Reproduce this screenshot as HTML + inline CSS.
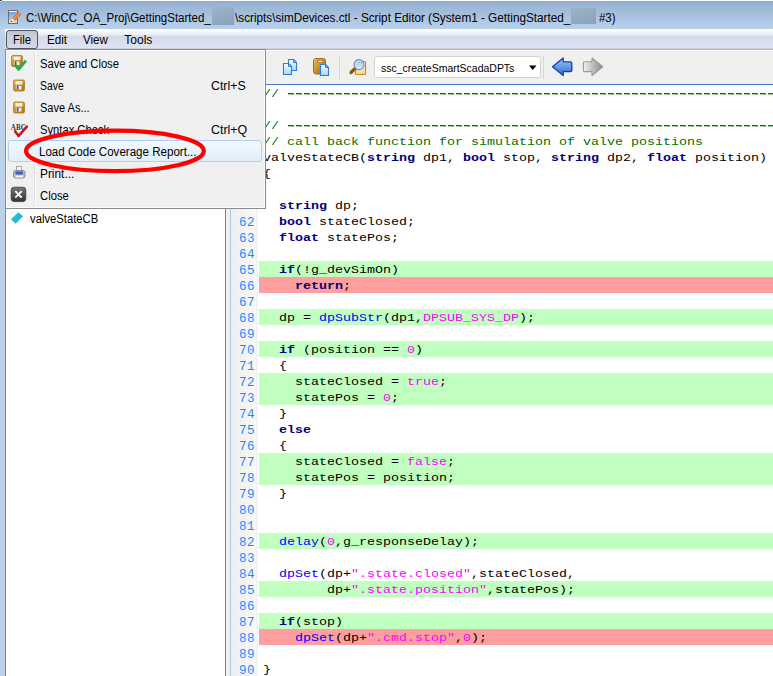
<!DOCTYPE html>
<html><head><meta charset="utf-8">
<style>
*{margin:0;padding:0;box-sizing:border-box}
html,body{width:773px;height:676px;overflow:hidden;background:#fff;position:relative;font-family:"Liberation Sans",sans-serif;font-size:12px;color:#000}
.a{position:absolute}
.t{position:absolute;white-space:pre;transform-origin:0 0;line-height:14px}
#frame{left:0;top:0;width:773px;height:676px;background:#bcd2eb}
#title{left:0;top:1px;width:773px;height:28px;background:linear-gradient(#8aa8cb,#96b2d3 2px,#b9d1eb)}
#topline{left:0;top:0;width:773px;height:1px;background:linear-gradient(90deg,#111 0,#111 1px,#aaa 1px,#eee 3px,#fff 4px)}
.blur{position:absolute;background:linear-gradient(160deg,#9db3c9,#8aa0b8)}
#menubar{left:5px;top:29px;width:768px;height:22px;background:linear-gradient(#fefefe 0,#fcfdfe 2px,#eef0f7 4px,#e9ecf5 6px,#d5daeb 7px,#dfe4f3 19px,#b4b8c8 20px,#b4b8c8 21px,#fff 21px)}
#filebtn{left:6px;top:30px;width:32px;height:19px;border:1px solid #50545e;border-radius:3px;background:linear-gradient(#c2c4ca,#cdd1dc 40%,#d6daea)}
#toolbar{left:5px;top:51px;width:768px;height:33px;background:#f0f0f0}
#tbline{left:258px;top:84px;width:515px;height:2px;background:linear-gradient(#4d80c2 50%,#a8c0e0 50%)}
#left{left:6px;top:85px;width:219px;height:591px;background:#fff}
#leftshadow{left:5px;top:85px;width:1px;height:591px;background:#7a8490}
#split{left:225px;top:85px;width:1px;height:591px;background:#787e88}
#split2{left:226px;top:85px;width:4px;height:591px;background:#f0f0f0}
#gut{left:230px;top:85px;width:29px;height:591px;background:linear-gradient(90deg,#eeeeee,#f8f8f8 26px,#ececec 27px,#fff 28px)}
#gutl{left:230px;top:85px;width:1px;height:591px;background:#a9c6e6}
#code{left:259px;top:85px;width:514px;height:591px;background:#fff}
.ln{position:absolute;left:259px;width:514px;height:16px}
.g{background:#c0ffc0}
.r{background:#ff9e9e}
pre{font-family:"Liberation Mono",monospace;font-size:13.333px;line-height:16px;white-space:pre;position:absolute;left:4px;top:1px;transform:scaleY(0.85);transform-origin:0 12px}
.num{position:absolute;left:231px;width:24px;text-align:right;font-family:"Liberation Mono",monospace;font-size:12.5px;letter-spacing:0.5px;line-height:16px;color:#1e8cff}
.k{color:#000080;font-weight:bold}
.f{color:#0000ff}
.c{color:#007000}
.m{color:#ff00ff}
.dash{position:absolute;left:288px;width:485px;height:2px;background:linear-gradient(rgba(255,255,255,0) 50%,rgba(255,255,255,.6) 50%),repeating-linear-gradient(90deg,#008000 0 6px,transparent 6px 8px)}
#menu{left:5px;top:49px;width:261px;height:160px;background:#f0f0f0;border:1px solid #8c8c8c;box-shadow:inset 0 0 0 1px #fbfbfb}
#menusep{left:34px;top:51px;width:1px;height:155px;background:#e0e0e0}
#menusep2{left:35px;top:51px;width:1px;height:155px;background:#fff}
#hl{left:8px;top:140px;width:254px;height:22px;border:1px solid #aecff7;border-radius:3px;background:linear-gradient(#f2f8fe,#e2eefb)}
</style></head><body>
<div class="a" id="frame"></div>
<div class="a" id="topline"></div>
<div class="a" id="title"></div><div class="a" style="left:0;top:1px;width:1px;height:1px;background:#f4f6fa"></div>
<svg class="a" style="left:0;top:0" width="30" height="30">
<defs><linearGradient id="ti" x1="0" y1="0" x2="0" y2="1"><stop offset="0" stop-color="#5d9de6"/><stop offset="0.6" stop-color="#9cc4ee"/><stop offset="1" stop-color="#dcdcdc"/></linearGradient>
<linearGradient id="pen" x1="0" y1="0" x2="1" y2="1"><stop offset="0" stop-color="#fff0e0"/><stop offset="0.35" stop-color="#f89050"/><stop offset="1" stop-color="#e05000"/></linearGradient></defs>
<rect x="8.5" y="10.5" width="9" height="13" fill="#d4d4d4" stroke="#6e6e6e"/>
<rect x="9" y="11" width="8" height="11.5" fill="url(#ti)"/>
<rect x="9" y="11" width="8" height="1" fill="#fff"/>
<path d="M12.2 18.4 L18.8 11.8 L21.4 14.4 L14.8 21 Z" fill="url(#pen)"/>
<path d="M12.2 18.4 L18.8 11.8" stroke="#b05020" stroke-width="0.6" opacity="0.7"/>
<path d="M12.2 18.4 L14.8 21 L10.8 22 Z" fill="#fff4c8"/>
<path d="M11.4 20.6 L12.2 21.4 L10.8 22 Z" fill="#222"/>
</svg>
<div class="t" style="left:26.04px;top:11px;transform:scaleX(0.9583)">C:\WinCC_OA_Proj\GettingStarted_</div>
<div class="blur" style="left:212px;top:7px;width:22px;height:18px"></div>
<div class="t" style="left:235.0px;top:11px;transform:scaleX(0.9784)">\scripts\simDevices.ctl - Script Editor (System1 - GettingStarted_</div>
<div class="blur" style="left:571px;top:8px;width:25px;height:16px"></div>
<div class="t" style="left:599.0px;top:11px;transform:scaleX(0.9529)">#3)</div>
<div class="a" id="menubar"></div>
<div class="a" id="filebtn"></div>
<div class="t" style="left:12.57px;top:33px;transform:scaleX(0.9333)">File</div><div class="t" style="left:46.73px;top:33px;transform:scaleX(0.97)">Edit</div><div class="t" style="left:83.4px;top:33px;transform:scaleX(0.9577)">View</div><div class="t" style="left:124.3px;top:33px;transform:scaleX(1.0)">Tools</div>
<div class="a" id="toolbar"></div>
<div class="a" id="tbline"></div>
<svg class="a" style="left:0;top:0" width="773" height="90">
<defs>
<linearGradient id="docg" x1="0" y1="0" x2="0" y2="1"><stop offset="0" stop-color="#fdfeff"/><stop offset="1" stop-color="#a9d3f6"/></linearGradient>
<linearGradient id="goldg" x1="0" y1="0" x2="1" y2="1"><stop offset="0" stop-color="#f0c36a"/><stop offset="0.5" stop-color="#c8902a"/><stop offset="1" stop-color="#9a6410"/></linearGradient>
<linearGradient id="backg" x1="0" y1="0" x2="0" y2="1"><stop offset="0" stop-color="#9cc8fa"/><stop offset="1" stop-color="#2a6ad8"/></linearGradient>
<linearGradient id="fwdg" x1="0" y1="0" x2="1" y2="0"><stop offset="0" stop-color="#f0f0f0"/><stop offset="1" stop-color="#8a8a8a"/></linearGradient>
<linearGradient id="creamg" x1="0" y1="0" x2="0" y2="1"><stop offset="0" stop-color="#fffdf6"/><stop offset="1" stop-color="#efd598"/></linearGradient>
<linearGradient id="lensg" x1="0" y1="0" x2="0" y2="1"><stop offset="0" stop-color="#86b8e6"/><stop offset="1" stop-color="#e4f8ff"/></linearGradient>
</defs>
<path d="M288.5 59.5 h5 l3 3 v8 h-8 z" fill="url(#docg)" stroke="#2a7fd6" stroke-width="1.1" stroke-linejoin="round"/>
<path d="M293.5 59.5 v3 h3" fill="none" stroke="#2a7fd6" stroke-width="1"/>
<path d="M283.5 63.5 h5 l3 3 v8 h-8 z" fill="url(#docg)" stroke="#2a7fd6" stroke-width="1.1" stroke-linejoin="round"/>
<path d="M288.5 63.5 v3 h3" fill="none" stroke="#2a7fd6" stroke-width="1"/>
<rect x="313.5" y="58.5" width="12" height="15.5" rx="2.5" fill="url(#goldg)" stroke="#a66c14" stroke-width="1"/>
<rect x="317.5" y="60.5" width="5" height="2" fill="#fff" stroke="#8a5a10" stroke-width="0.6"/>
<path d="M320.5 64.5 h5 l3 3 v8 h-8 z" fill="url(#docg)" stroke="#2a7fd6" stroke-width="1.1" stroke-linejoin="round"/>
<path d="M325.5 64.5 v3 h3" fill="none" stroke="#2a7fd6" stroke-width="1"/>
<rect x="339" y="56" width="1" height="23" fill="#d6d6d6"/>
<rect x="543" y="56" width="1" height="23" fill="#d6d6d6"/>
<rect x="355.5" y="61.5" width="10" height="13" rx="1" fill="url(#creamg)" stroke="#d08a12" stroke-width="1.2"/>
<path d="M351 72.5 L355 68.5" stroke="#8a5a10" stroke-width="3.2" stroke-linecap="round"/>
<circle cx="359" cy="64.6" r="5" fill="url(#lensg)" stroke="#7f86c8" stroke-width="1.1"/><path d="M356 64 A3.4 3.4 0 0 1 361 61.3" fill="none" stroke="#fff" stroke-width="0.9" opacity="0.85"/>
<rect x="374.5" y="56.5" width="166" height="21" rx="2" fill="#fff" stroke="#d2d2d2"/>
<path d="M529 65.5 h7.5 l-3.75 4.5 z" fill="#000"/>
<path d="M552.5 66.8 L563.2 58 L563.2 61.8 L570.5 61.8 Q571.8 61.8 571.8 63 L571.8 70.5 Q571.8 71.6 570.5 71.6 L563.2 71.6 L563.2 75.6 Z" fill="url(#backg)" stroke="#1440a8" stroke-width="1.3" stroke-linejoin="round"/>
<path d="M602.8 66.8 L592 58 L592 61.8 L584.7 61.8 Q583.4 61.8 583.4 63 L583.4 70.5 Q583.4 71.6 584.7 71.6 L592 71.6 L592 75.6 Z" fill="url(#fwdg)" stroke="#9a9a9a" stroke-width="1.1" stroke-linejoin="round"/>
</svg>
<div class="t" style="left:381.45px;top:61px;transform:scaleX(0.9525);font-size:11px">ssc_createSmartScadaDPTs</div>
<div class="a" id="leftshadow"></div>
<div class="a" id="left"></div>
<svg class="a" style="left:0;top:200px" width="30" height="30"><path d="M18.3 12.3 L23 16.3 L15.7 23.7 L11 19.3 Z" fill="#2bb8cc"/></svg>
<div class="t" style="left:29.9px;top:212px;transform:scaleX(0.9375)">valveStateCB</div>
<div class="a" id="split"></div>
<div class="a" id="split2"></div>
<div class="a" id="gut"></div>
<div class="a" id="gutl"></div>
<div class="a" id="code"></div>
<div class="ln " style="top:85px"><pre><span class="c">//</span></pre></div>
<div class="ln " style="top:101px"><pre></pre></div>
<div class="ln " style="top:117px"><pre><span class="c">//</span></pre></div>
<div class="ln " style="top:133px"><pre><span class="c">// call back function for simulation of valve positions</span></pre></div>
<div class="ln " style="top:149px"><pre>valveStateCB(<span class="k">string</span> dp1, <span class="k">bool</span> stop, <span class="k">string</span> dp2, <span class="k">float</span> position)</pre></div>
<div class="ln " style="top:165px"><pre>{</pre></div>
<div class="ln " style="top:181px"><pre></pre></div>
<div class="ln " style="top:197px"><pre>  <span class="k">string</span> dp;</pre></div>
<div class="ln " style="top:213px"><pre>  <span class="k">bool</span> stateClosed;</pre></div>
<div class="num" style="top:215px">62</div>
<div class="ln " style="top:229px"><pre>  <span class="k">float</span> statePos;</pre></div>
<div class="num" style="top:231px">63</div>
<div class="ln " style="top:245px"><pre></pre></div>
<div class="num" style="top:247px">64</div>
<div class="ln g" style="top:261px"><pre>  <span class="k">if</span>(!g_devSimOn)</pre></div>
<div class="num" style="top:263px">65</div>
<div class="ln r" style="top:277px"><pre>    <span class="k">return</span>;</pre></div>
<div class="num" style="top:279px">66</div>
<div class="ln " style="top:293px"><pre></pre></div>
<div class="num" style="top:295px">67</div>
<div class="ln g" style="top:309px"><pre>  dp = <span class="f">dpSubStr</span>(dp1,<span class="m">DPSUB_SYS_DP</span>);</pre></div>
<div class="num" style="top:311px">68</div>
<div class="ln " style="top:325px"><pre></pre></div>
<div class="num" style="top:327px">69</div>
<div class="ln g" style="top:341px"><pre>  <span class="k">if</span> (position == <span class="m">0</span>)</pre></div>
<div class="num" style="top:343px">70</div>
<div class="ln " style="top:357px"><pre>  {</pre></div>
<div class="num" style="top:359px">71</div>
<div class="ln g" style="top:373px"><pre>    stateClosed = <span class="m">true</span>;</pre></div>
<div class="num" style="top:375px">72</div>
<div class="ln g" style="top:389px"><pre>    statePos = <span class="m">0</span>;</pre></div>
<div class="num" style="top:391px">73</div>
<div class="ln " style="top:405px"><pre>  }</pre></div>
<div class="num" style="top:407px">74</div>
<div class="ln " style="top:421px"><pre>  <span class="k">else</span></pre></div>
<div class="num" style="top:423px">75</div>
<div class="ln " style="top:437px"><pre>  {</pre></div>
<div class="num" style="top:439px">76</div>
<div class="ln g" style="top:453px"><pre>    stateClosed = <span class="m">false</span>;</pre></div>
<div class="num" style="top:455px">77</div>
<div class="ln g" style="top:469px"><pre>    statePos = position;</pre></div>
<div class="num" style="top:471px">78</div>
<div class="ln " style="top:485px"><pre>  }</pre></div>
<div class="num" style="top:487px">79</div>
<div class="ln " style="top:501px"><pre></pre></div>
<div class="num" style="top:503px">80</div>
<div class="ln " style="top:517px"><pre></pre></div>
<div class="num" style="top:519px">81</div>
<div class="ln g" style="top:533px"><pre>  <span class="f">delay</span>(<span class="m">0</span>,g_responseDelay);</pre></div>
<div class="num" style="top:535px">82</div>
<div class="ln " style="top:549px"><pre></pre></div>
<div class="num" style="top:551px">83</div>
<div class="ln " style="top:565px"><pre>  <span class="f">dpSet</span>(dp+<span class="m">".state.closed"</span>,stateClosed,</pre></div>
<div class="num" style="top:567px">84</div>
<div class="ln g" style="top:581px"><pre>        dp+<span class="m">".state.position"</span>,statePos);</pre></div>
<div class="num" style="top:583px">85</div>
<div class="ln " style="top:597px"><pre></pre></div>
<div class="num" style="top:599px">86</div>
<div class="ln g" style="top:613px"><pre>  <span class="k">if</span>(stop)</pre></div>
<div class="num" style="top:615px">87</div>
<div class="ln r" style="top:629px"><pre>    <span class="f">dpSet</span>(dp+<span class="m">".cmd.stop"</span>,<span class="m">0</span>);</pre></div>
<div class="num" style="top:631px">88</div>
<div class="ln " style="top:645px"><pre></pre></div>
<div class="num" style="top:647px">89</div>
<div class="ln " style="top:661px"><pre>}</pre></div>
<div class="num" style="top:663px">90</div>
<div class="dash" style="top:93px"></div><div class="dash" style="top:125px"></div>
<div class="a" id="menu"></div>
<div class="a" id="menusep"></div>
<div class="a" id="menusep2"></div>
<div class="a" id="hl"></div>
<svg class="a" style="left:0;top:0" width="40" height="230">
<defs>
<linearGradient id="flop" x1="0" y1="0" x2="1" y2="1"><stop offset="0" stop-color="#e6b860"/><stop offset="1" stop-color="#a86c10"/></linearGradient>
<linearGradient id="grayb" x1="0" y1="0" x2="0" y2="1"><stop offset="0" stop-color="#777"/><stop offset="1" stop-color="#333"/></linearGradient>
</defs>
<rect x="11.5" y="55.5" width="11" height="11" rx="1.5" fill="url(#flop)" stroke="#b07a20" stroke-width="0.8"/>
<rect x="13.5" y="56.5" width="7" height="3.5" fill="#fbeed0"/>
<rect x="14.5" y="61.5" width="5" height="3.5" fill="#f0f0f0"/>
<rect x="15" y="61.5" width="1.5" height="3.5" fill="#555"/>
<path d="M15.2 65.2 L18.6 69.4 L26 60.6" fill="none" stroke="#22b04a" stroke-width="2.8" stroke-linejoin="round"/>
<rect x="13.5" y="80" width="11" height="11" rx="1.5" fill="url(#flop)" stroke="#b07a20" stroke-width="0.8"/>
<rect x="15.5" y="81" width="7" height="3.5" fill="#fbeed0"/>
<rect x="16.5" y="86" width="5" height="3.5" fill="#f0f0f0"/>
<rect x="17" y="86" width="1.5" height="3.5" fill="#555"/>
<rect x="13.5" y="102" width="11" height="11" rx="1.5" fill="url(#flop)" stroke="#b07a20" stroke-width="0.8"/>
<rect x="15.5" y="103" width="7" height="3.5" fill="#fbeed0"/>
<rect x="16.5" y="108" width="5" height="3.5" fill="#f0f0f0"/>
<rect x="17" y="108" width="1.5" height="3.5" fill="#555"/>
<text x="10.8" y="129.8" font-family="Liberation Serif" font-weight="bold" font-size="7.6" fill="#3a3a3a" textLength="15" lengthAdjust="spacingAndGlyphs">ABC</text>
<path d="M15.2 131.4 L18.6 136 L26.8 126.6" fill="none" stroke="#c4141c" stroke-width="2.6" stroke-linejoin="round" stroke-linecap="round"/>
<rect x="16.5" y="166.5" width="5" height="5" fill="#f4f4f4" stroke="#999" stroke-width="0.8"/>
<rect x="13.5" y="170.5" width="11.5" height="7.5" rx="2" fill="#b8b8b8" stroke="#808080" stroke-width="0.8"/>
<rect x="15.5" y="171.5" width="7.5" height="3" rx="1" fill="#2a62d8"/>
<rect x="15.5" y="175.5" width="7.5" height="2" fill="#f4f4f4"/>
<rect x="11.2" y="187.2" width="14.6" height="14.4" rx="3" fill="url(#grayb)" stroke="#3a3a3a" stroke-width="0.8"/>
<path d="M15.3 191.2 L21.7 197.6 M21.7 191.2 L15.3 197.6" stroke="#fff" stroke-width="1.9"/>
</svg>
<div class="t" style="left:39.77px;top:57px;transform:scaleX(0.9313)">Save and Close</div>
<div class="t" style="left:39.83px;top:79px;transform:scaleX(0.8654)">Save</div><div class="t" style="left:210.57px;top:79px;transform:scaleX(1.0312)">Ctrl+S</div>
<div class="t" style="left:39.78px;top:101px;transform:scaleX(0.9192)">Save As...</div>
<div class="t" style="left:39.77px;top:123px;transform:scaleX(0.9329)">Syntax Check</div><div class="t" style="left:210.56px;top:123px;transform:scaleX(1.0353)">Ctrl+Q</div>
<div class="t" style="left:39.14px;top:145px;transform:scaleX(0.964)">Load Code Coverage Report...</div>
<div class="t" style="left:39.71px;top:167px;transform:scaleX(0.9879)">Print...</div>
<div class="t" style="left:39.76px;top:189px;transform:scaleX(0.9379)">Close</div>
<svg class="a" style="left:0;top:0" width="773" height="676">
<ellipse cx="114.9" cy="150.9" rx="88.9" ry="20.2" fill="none" stroke="#f00" stroke-width="4.2"/>
</svg>
</body></html>
